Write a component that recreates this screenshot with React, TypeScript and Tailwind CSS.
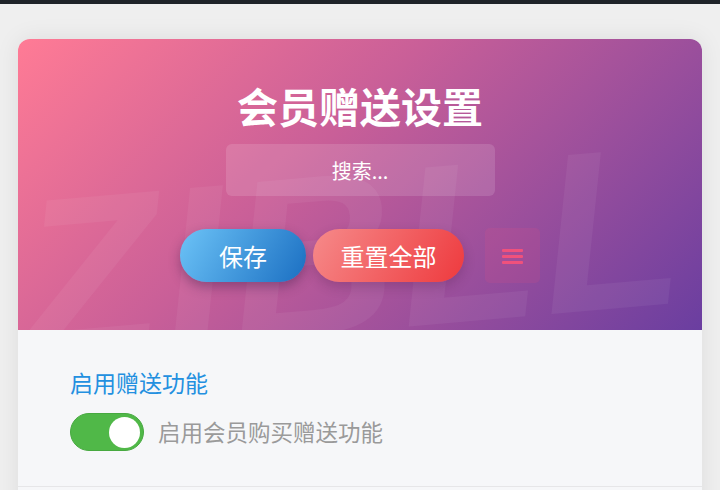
import { useState } from 'react';

const cjk = { fontFamily: '"Noto Sans CJK SC", "Noto Sans", sans-serif' };

const MenuIcon = () => (
    <svg width="22" height="20" viewBox="0 0 22 20">
        <rect x="0" y="3" width="21" height="3" rx="1" fill="#f0517c" />
        <rect x="0" y="9" width="21" height="3" rx="1" fill="#f0517c" />
        <rect x="0" y="15" width="21" height="3" rx="1" fill="#f0517c" />
    </svg>
);

const GiftSettingsPage = () => {
    const [enabled, setEnabled] = useState(true);
    const [query, setQuery] = useState('');

    return (
        <div className="min-h-screen bg-[#efefef]" style={cjk}>
            <div className="h-[4px] bg-[#1f2329]" />
            <div className="px-[18px] pt-[35px]">
                <div className="rounded-[12px] overflow-hidden bg-[#f6f7f9] shadow-[0_0_24px_rgba(0,0,0,0.08)]">
                    {/* header */}
                    <div className="relative overflow-hidden h-[291px] bg-[linear-gradient(135deg,#ff7b95_0%,#c95f98_42%,#6a3ea0_100%)]">
                        <div
                            aria-hidden="true"
                            className="absolute left-[2px] top-[128px] text-[228px] leading-none font-bold italic tracking-[4px] text-white/[0.055] -rotate-[5deg] origin-left select-none pointer-events-none"
                            style={{ fontFamily: '"Liberation Sans", Arial, sans-serif' }}
                        >
                            ZIBLL
                        </div>
                        <div className="relative flex flex-col items-center pt-[42px]">
                            <h1 className="text-[41px] leading-[48px] font-bold text-white">会员赠送设置</h1>
                            <input
                                value={query}
                                onChange={e => setQuery(e.target.value)}
                                placeholder="搜索..."
                                className="mt-[15px] w-[269px] h-[52px] rounded-[6px] bg-white/[0.13] text-center text-[20px] text-white placeholder:text-white outline-none"
                            />
                            <div className="mt-[32px] flex items-center">
                                <button className="w-[126px] h-[53px] rounded-full bg-[linear-gradient(120deg,#6cc3f7,#1b6fc2)] text-white text-[24px] shadow-[0_5px_12px_rgba(40,20,60,0.35)]">
                                    保存
                                </button>
                                <button className="ml-[7px] w-[151px] h-[53px] rounded-full bg-[linear-gradient(120deg,#f68a8a,#ee3a3e)] text-white text-[24px] shadow-[0_5px_12px_rgba(60,20,60,0.22)]">
                                    重置全部
                                </button>
                                <button className="ml-[21px] w-[55px] h-[55px] rounded-[5px] bg-[#ff4f7a]/[0.12] flex items-center justify-center">
                                    <MenuIcon />
                                </button>
                            </div>
                        </div>
                    </div>

                    {/* body */}
                    <div className="h-[157px] px-[52px] pt-[37px] border-b border-[#e6e6e8]">
                        <h2 className="text-[23px] leading-[30px] text-[#2390e0]">启用赠送功能</h2>
                        <div className="mt-[16px] flex items-center">
                            <button
                                onClick={() => setEnabled(!enabled)}
                                className={
                                    enabled
                                        ? 'w-[74px] h-[38px] rounded-full bg-[#50b848] border border-[#47a940] flex items-center justify-end pr-[3px]'
                                        : 'w-[74px] h-[38px] rounded-full bg-[#ccc] border border-[#bbb] flex items-center justify-start pl-[3px]'
                                }
                            >
                                <span className="w-[31px] h-[31px] rounded-full bg-white" />
                            </button>
                            <span className="ml-[14px] text-[22.5px] text-[#9a9a9a]">启用会员购买赠送功能</span>
                        </div>
                    </div>
                    <div className="h-[40px]" />
                </div>
            </div>
        </div>
    );
};

export default GiftSettingsPage;
